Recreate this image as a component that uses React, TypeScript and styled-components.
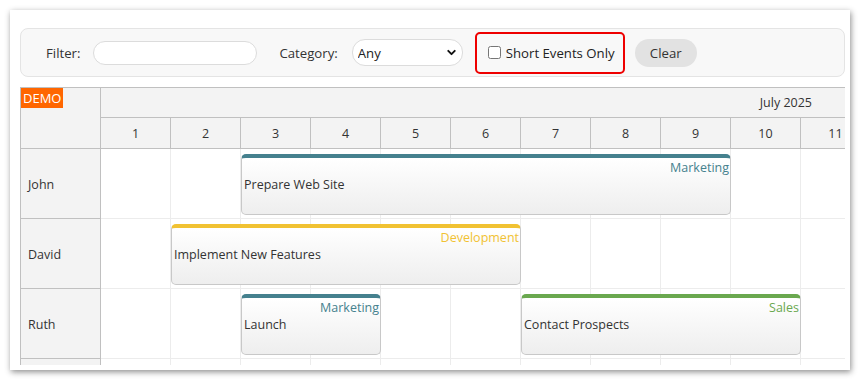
import React from "react";
import styled, { createGlobalStyle } from "styled-components";
import { ChevronDown } from "lucide-react";

const GlobalStyle = createGlobalStyle`
  html, body {
    margin: 0;
    padding: 0;
    background: #ffffff;
  }
  body {
    font-family: "Open Sans", "Noto Sans", sans-serif;
    color: #333;
  }
`;

const Page = styled.div`
  padding: 10px;
`;

const Panel = styled.div`
  width: 840px;
  height: 360px;
  box-sizing: border-box;
  padding: 18px 5px 5px 10px;
  background: #fff;
  box-shadow: 1px 2px 6px rgba(0, 0, 0, 0.45);
  overflow: hidden;
`;

const Toolbar = styled.div`
  display: flex;
  align-items: center;
  height: 49px;
  box-sizing: border-box;
  padding-left: 25px;
  background: #f8f8f8;
  border: 1px solid #e4e4e4;
  border-radius: 8px;
  font-size: 13.2px;
  color: #333;
`;

const Label = styled.span<{ $gap: number }>`
  margin-right: ${(p) => p.$gap}px;
`;

const TextInput = styled.input`
  width: 164px;
  height: 24px;
  box-sizing: border-box;
  border: 1px solid #dcdcdc;
  border-radius: 12px;
  background: #fff;
  outline: none;
  margin-right: 22px;
`;

const SelectWrap = styled.div`
  position: relative;
  margin-right: 12px;
`;

const Select = styled.select`
  appearance: none;
  width: 111px;
  height: 27px;
  box-sizing: border-box;
  padding: 0 0 0 5px;
  border: 1px solid #dcdcdc;
  border-radius: 13px;
  background: #fff;
  font-family: "Open Sans", sans-serif;
  font-size: 13.2px;
  color: #222;
  outline: none;
`;

const Chevron = styled.span`
  position: absolute;
  right: 5px;
  top: 7px;
  display: flex;
  pointer-events: none;
  color: #111;
`;

const Highlight = styled.label`
  display: flex;
  align-items: center;
  height: 42px;
  width: 150px;
  box-sizing: border-box;
  padding-left: 11px;
  border: 2px solid #ee0000;
  border-radius: 5px;
  margin-right: 10px;
  color: #222;
`;

const Checkbox = styled.input`
  width: 13px;
  height: 13px;
  margin: 0 5px 0 0;
`;

const ClearButton = styled.button`
  height: 28px;
  width: 62px;
  border: none;
  border-radius: 14px;
  background: #e2e2e2;
  font-family: "Open Sans", sans-serif;
  font-size: 13.2px;
  color: #333;
`;

const Scheduler = styled.div`
  display: flex;
  margin-top: 10px;
  width: 825px;
  height: 278px;
  border-top: 1px solid #c0c0c0;
  border-left: 1px solid #c0c0c0;
  box-sizing: border-box;
  overflow: hidden;
  font-size: 12.5px;
  color: #333;
`;

const RowHeaders = styled.div`
  flex: 0 0 80px;
  box-sizing: border-box;
  border-right: 1px solid #c0c0c0;
  background: #f3f3f3;
`;

const Corner = styled.div`
  height: 61px;
  box-sizing: border-box;
  border-bottom: 1px solid #c0c0c0;
`;

const DemoBadge = styled.span`
  display: inline-block;
  background: #ff6600;
  color: #fff;
  font-size: 13px;
  line-height: 20px;
  padding: 0 2px;
`;

const ResourceName = styled.div`
  height: 70px;
  box-sizing: border-box;
  border-bottom: 1px solid #c0c0c0;
  display: flex;
  align-items: center;
  padding: 2px 0 0 7px;
`;

const Timeline = styled.div`
  flex: 1;
  overflow: hidden;
`;

const MonthRow = styled.div`
  width: 770px;
  height: 30px;
  box-sizing: border-box;
  border-bottom: 1px solid #c0c0c0;
  background: #f3f3f3;
  display: flex;
  align-items: center;
`;

const MonthLabel = styled.div`
  width: 744px;
  text-align: right;
  padding-right: 33px;
  box-sizing: border-box;
`;

const DayRow = styled.div`
  display: grid;
  grid-template-columns: repeat(11, 70px);
  height: 31px;
  background: #f3f3f3;
`;

const DayCell = styled.div`
  box-sizing: border-box;
  border-right: 1px solid #c0c0c0;
  border-bottom: 1px solid #c0c0c0;
  display: flex;
  align-items: center;
  justify-content: center;
`;

const Lane = styled.div`
  display: grid;
  grid-template-columns: repeat(11, 70px);
  grid-template-rows: 70px;
`;

const Cell = styled.div<{ $col: number }>`
  grid-row: 1;
  grid-column: ${(p) => p.$col};
  box-sizing: border-box;
  border-right: 1px solid #ececec;
  border-bottom: 1px solid #ececec;
`;

const Event = styled.div<{ $from: number; $to: number; $color: string }>`
  grid-row: 1;
  grid-column: ${(p) => p.$from} / ${(p) => p.$to};
  position: relative;
  margin: 5px 0 4px 0;
  box-sizing: border-box;
  border: 1px solid #c8c8c8;
  border-top: 4px solid ${(p) => p.$color};
  border-radius: 5px;
  background: linear-gradient(#ffffff, #eeeeee);
  display: flex;
  align-items: center;
  padding: 0 0 4px 2px;
  color: #333;
  z-index: 1;
`;

const Category = styled.span<{ $color: string }>`
  position: absolute;
  top: 1px;
  right: 1px;
  color: ${(p) => p.$color};
`;

const colors = {
  Marketing: "#45818e",
  Development: "#f1c232",
  Sales: "#6aa84f",
};

type Cat = keyof typeof colors;

interface EventData {
  text: string;
  from: number;
  to: number;
  category: Cat;
}

const resources: { name: string; events: EventData[] }[] = [
  { name: "John", events: [{ text: "Prepare Web Site", from: 3, to: 10, category: "Marketing" }] },
  { name: "David", events: [{ text: "Implement New Features", from: 2, to: 7, category: "Development" }] },
  {
    name: "Ruth",
    events: [
      { text: "Launch", from: 3, to: 5, category: "Marketing" },
      { text: "Contact Prospects", from: 7, to: 11, category: "Sales" },
    ],
  },
  { name: "", events: [] },
];

const days = Array.from({ length: 11 }, (_, i) => i + 1);

const App: React.FC = () => (
  <Page>
    <GlobalStyle />
    <Panel>
      <Toolbar>
        <Label $gap={13}>Filter:</Label>
        <TextInput type="text" />
        <Label $gap={14}>Category:</Label>
        <SelectWrap>
          <Select defaultValue="any">
            <option value="any">Any</option>
            <option value="marketing">Marketing</option>
            <option value="development">Development</option>
            <option value="sales">Sales</option>
          </Select>
          <Chevron>
            <ChevronDown size={13} strokeWidth={3.5} />
          </Chevron>
        </SelectWrap>
        <Highlight>
          <Checkbox type="checkbox" />
          Short Events Only
        </Highlight>
        <ClearButton>Clear</ClearButton>
      </Toolbar>

      <Scheduler>
        <RowHeaders>
          <Corner>
            <DemoBadge>DEMO</DemoBadge>
          </Corner>
          {resources.map((r, i) => (
            <ResourceName key={i}>{r.name}</ResourceName>
          ))}
        </RowHeaders>
        <Timeline>
          <MonthRow>
            <MonthLabel>July 2025</MonthLabel>
          </MonthRow>
          <DayRow>
            {days.map((d) => (
              <DayCell key={d}>{d}</DayCell>
            ))}
          </DayRow>
          {resources.map((r, i) => (
            <Lane key={i}>
              {days.map((d) => (
                <Cell key={d} $col={d} />
              ))}
              {r.events.map((e) => (
                <Event key={e.text} $from={e.from} $to={e.to} $color={colors[e.category]}>
                  {e.text}
                  <Category $color={colors[e.category]}>{e.category}</Category>
                </Event>
              ))}
            </Lane>
          ))}
        </Timeline>
      </Scheduler>
    </Panel>
  </Page>
);

export default App;
